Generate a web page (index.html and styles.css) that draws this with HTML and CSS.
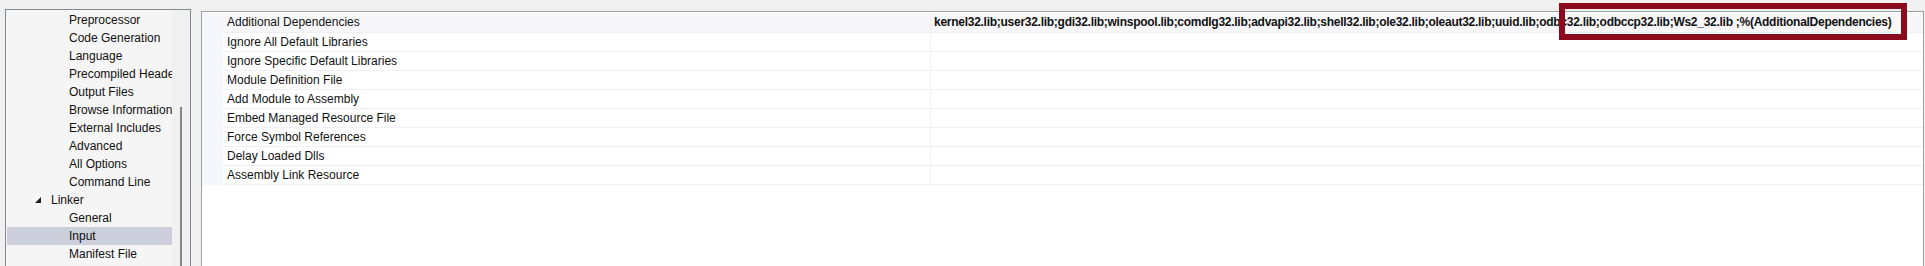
FILE: index.html
```html
<!DOCTYPE html>
<html lang="en">
<head>
  <meta charset="UTF-8" />
  <title>Linker Input</title>
  <link rel="stylesheet" href="styles.css">
</head>
<body>
  <div class="page">
    <div class="tree">
      <div class="tree-list">
        <div class="node leaf">Preprocessor</div>
        <div class="node leaf">Code Generation</div>
        <div class="node leaf">Language</div>
        <div class="node leaf">Precompiled Headers</div>
        <div class="node leaf">Output Files</div>
        <div class="node leaf">Browse Information</div>
        <div class="node leaf">External Includes</div>
        <div class="node leaf">Advanced</div>
        <div class="node leaf">All Options</div>
        <div class="node leaf">Command Line</div>
        <div class="node group">
          <svg class="expander" width="6" height="6" viewBox="0 0 6 6"><polygon points="6,0 6,6 0,6" /></svg>
          Linker
        </div>
        <div class="node leaf">General</div>
        <div class="node leaf selected">Input</div>
        <div class="node leaf">Manifest File</div>
      </div>
      <div class="scrollbar"><div class="thumb"></div></div>
    </div>

    <div class="grid">
      <div class="row current">
        <div class="gutter"></div>
        <div class="name">Additional Dependencies</div>
        <div class="value">kernel32.lib;user32.lib;gdi32.lib;winspool.lib;comdlg32.lib;advapi32.lib;shell32.lib;ole32.lib;oleaut32.lib;uuid.lib;odbc32.lib;odbccp32.lib;Ws2_32.lib ;%(AdditionalDependencies)</div>
      </div>
      <div class="row">
        <div class="gutter"></div>
        <div class="name">Ignore All Default Libraries</div>
        <div class="value"></div>
      </div>
      <div class="row">
        <div class="gutter"></div>
        <div class="name">Ignore Specific Default Libraries</div>
        <div class="value"></div>
      </div>
      <div class="row">
        <div class="gutter"></div>
        <div class="name">Module Definition File</div>
        <div class="value"></div>
      </div>
      <div class="row">
        <div class="gutter"></div>
        <div class="name">Add Module to Assembly</div>
        <div class="value"></div>
      </div>
      <div class="row">
        <div class="gutter"></div>
        <div class="name">Embed Managed Resource File</div>
        <div class="value"></div>
      </div>
      <div class="row">
        <div class="gutter"></div>
        <div class="name">Force Symbol References</div>
        <div class="value"></div>
      </div>
      <div class="row">
        <div class="gutter"></div>
        <div class="name">Delay Loaded Dlls</div>
        <div class="value"></div>
      </div>
      <div class="row">
        <div class="gutter"></div>
        <div class="name">Assembly Link Resource</div>
        <div class="value"></div>
      </div>
    </div>
  </div>

  <div class="highlight-box"></div>
</body>
</html>
```

FILE: styles.css
```css
body {
  margin: 0;
  width: 1925px;
  height: 266px;
  overflow: hidden;
  background: #f0f0f0;
  font-family: "Liberation Sans", Arial, sans-serif;
  font-size: 12px;
  color: #111;
}
.page {
  display: flex;
  align-items: flex-start;
  padding: 9px 1px 0 5px;
}

/* left tree */
.tree {
  display: flex;
  width: 186px;
  height: 300px;
  box-sizing: border-box;
  border: 1px solid #828790;
  background: #f5f5f5;
}
.tree-list {
  width: 166px;
  padding: 1px 0 0 1px;
  box-sizing: border-box;
  overflow: hidden;
}
.node {
  height: 18px;
  line-height: 18px;
  white-space: nowrap;
  overflow: hidden;
}
.leaf { padding-left: 62px; }
.group {
  display: flex;
  align-items: center;
  padding-left: 28px;
}
.expander {
  fill: #1e1e1e;
  margin-right: 10px;
}
.selected { background: #cccedb; }
.scrollbar {
  width: 18px;
  background: #f0f0f0;
}
.thumb {
  width: 2px;
  height: 200px;
  margin: 97px 0 0 8px;
  background: #868686;
}

/* property grid */
.grid {
  flex: 1;
  margin: 2px 0 0 10px;
  height: 300px;
  border: 1px solid #a0a0a0;
  background: #fff;
  padding-top: 1px;
  box-sizing: border-box;
}
.row {
  display: flex;
  height: 19px;
}
.row:first-child { height: 20px; }
.gutter {
  width: 21px;
  background: #f5f7fc;
}
.name, .value {
  line-height: 18px;
  border-bottom: 1px solid #eff0f5;
  white-space: nowrap;
  overflow: hidden;
}
.name {
  width: 708px;
  box-sizing: border-box;
  padding-left: 4px;
  border-right: 1px solid #eff0f5;
}
.value {
  flex: 1;
  padding-left: 3px;
  font-weight: bold;
  letter-spacing: -0.27px;
}
.current .name, .current .value {
  background: #f7f7f9;
  line-height: 19px;
}

.highlight-box {
  position: absolute;
  left: 1559px;
  top: 3px;
  width: 348px;
  height: 37px;
  box-sizing: border-box;
  border: 6px solid #8a0b1e;
}
```
